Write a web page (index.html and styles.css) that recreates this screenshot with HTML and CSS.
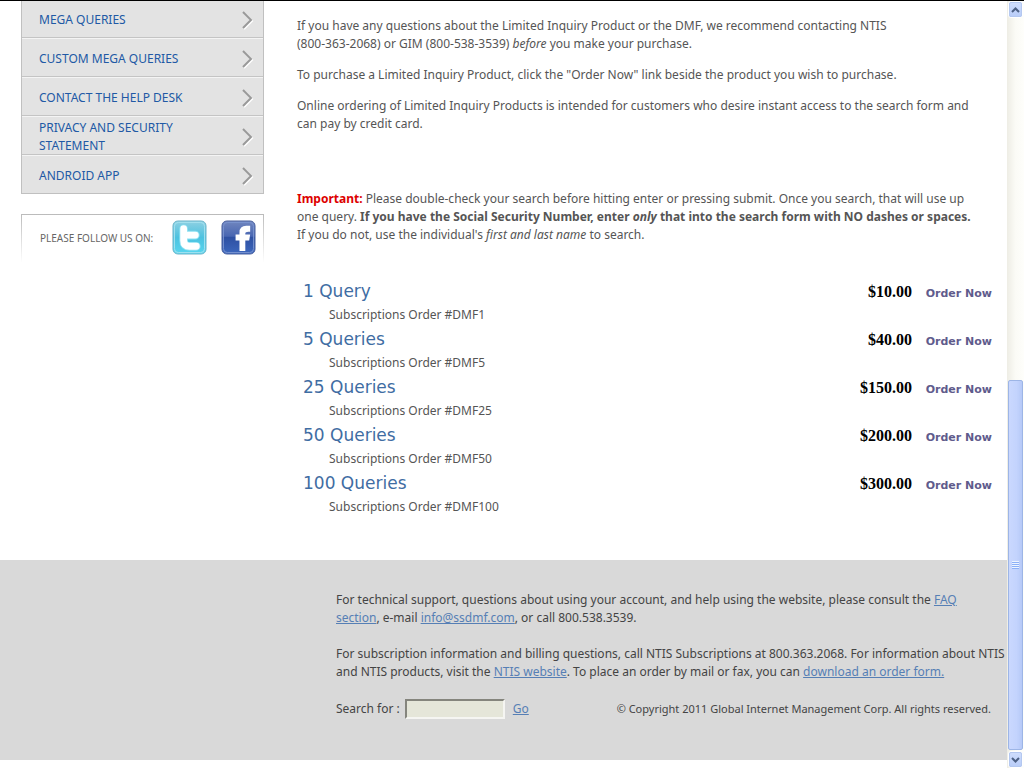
FILE: index.html
```html
<!DOCTYPE html>
<html lang="en">
<head>
<meta charset="utf-8">
<title>Limited Inquiry Products</title>
<link rel="stylesheet" href="styles.css">
</head>
<body>
<div class="window">
  <div class="page">
    <div class="columns">
      <aside class="sidebar">
        <nav class="menu">
          <a href="#"><span>MEGA QUERIES</span><svg class="chevron" viewBox="0 0 14 20"><path class="glow" d="M4 3l8 8-8 8"/><path class="line" d="M3 2l8 8-8 8"/></svg></a>
          <a href="#"><span>CUSTOM MEGA QUERIES</span><svg class="chevron" viewBox="0 0 14 20"><path class="glow" d="M4 3l8 8-8 8"/><path class="line" d="M3 2l8 8-8 8"/></svg></a>
          <a href="#"><span>CONTACT THE HELP DESK</span><svg class="chevron" viewBox="0 0 14 20"><path class="glow" d="M4 3l8 8-8 8"/><path class="line" d="M3 2l8 8-8 8"/></svg></a>
          <a href="#"><span>PRIVACY AND SECURITY STATEMENT</span><svg class="chevron" viewBox="0 0 14 20"><path class="glow" d="M4 3l8 8-8 8"/><path class="line" d="M3 2l8 8-8 8"/></svg></a>
          <a href="#"><span>ANDROID APP</span><svg class="chevron" viewBox="0 0 14 20"><path class="glow" d="M4 3l8 8-8 8"/><path class="line" d="M3 2l8 8-8 8"/></svg></a>
        </nav>
        <div class="follow">
          <span class="follow-label">PLEASE FOLLOW US ON:</span>
          <a href="#" aria-label="Twitter">
            <svg class="social" viewBox="0 0 36 36">
              <defs><linearGradient id="tw" x1="0" y1="0" x2="0" y2="1"><stop offset="0" stop-color="#8fd0e2"/><stop offset=".5" stop-color="#4cc2e0"/><stop offset="1" stop-color="#58d6ef"/></linearGradient></defs>
              <rect x="1" y="1" width="34" height="34" rx="5" fill="url(#tw)" stroke="#6eb5c9"/>
              <rect x="2.500" y="2.500" width="31" height="31" rx="4" fill="none" stroke="#a6e2ef"/>
              <path d="M12 9v12q0 6 6 6h7M12 15.500h12" fill="none" stroke="#8be0f2" stroke-width="9" stroke-linecap="round" stroke-linejoin="round"/>
              <path d="M12 9v12q0 6 6 6h7M12 15.500h12" fill="none" stroke="#fff" stroke-width="7" stroke-linecap="round" stroke-linejoin="round"/>
            </svg>
          </a>
          <a href="#" aria-label="Facebook">
            <svg class="social" viewBox="0 0 36 36">
              <defs><linearGradient id="fb" x1="0" y1="0" x2="0" y2="1"><stop offset="0" stop-color="#7186be"/><stop offset=".46" stop-color="#4866b2"/><stop offset=".5" stop-color="#2e50a2"/><stop offset="1" stop-color="#3c67bd"/></linearGradient></defs>
              <rect x="1" y="1" width="34" height="34" rx="5" fill="url(#fb)" stroke="#4c629f"/>
              <rect x="2.500" y="2.500" width="31" height="31" rx="4" fill="none" stroke="#7a94cf"/>
              <path d="M19 32V21h-4v-6h4v-2q0-7 7-7h4v6h-2q-3 0-3 2v1h5l-1 6h-4v11z" fill="#fff"/>
            </svg>
          </a>
        </div>
      </aside>
      <main class="content">
        <p>If you have any questions about the Limited Inquiry Product or the DMF, we recommend contacting NTIS<br>(800-363-2068) or GIM (800-538-3539) <em>before</em> you make your purchase.</p>
        <p>To purchase a Limited Inquiry Product, click the "Order Now" link beside the product you wish to purchase.</p>
        <p>Online ordering of Limited Inquiry Products is intended for customers who desire instant access to the search form and<br>can pay by credit card.</p>
        <p class="notice"><strong class="important">Important:</strong> Please double-check your search before hitting enter or pressing submit. Once you search, that will use up<br>one query. <strong>If you have the Social Security Number, enter <em>only</em> that into the search form with NO dashes or spaces.</strong><br>If you do not, use the individual's <em>first and last name</em> to search.</p>
        <table class="products">
          <tbody>
            <tr><td><h2>1 Query</h2><div class="sku">Subscriptions Order #DMF1</div></td><td class="price">$10.00</td><td class="order"><a href="#">Order Now</a></td></tr>
            <tr><td><h2>5 Queries</h2><div class="sku">Subscriptions Order #DMF5</div></td><td class="price">$40.00</td><td class="order"><a href="#">Order Now</a></td></tr>
            <tr><td><h2>25 Queries</h2><div class="sku">Subscriptions Order #DMF25</div></td><td class="price">$150.00</td><td class="order"><a href="#">Order Now</a></td></tr>
            <tr><td><h2>50 Queries</h2><div class="sku">Subscriptions Order #DMF50</div></td><td class="price">$200.00</td><td class="order"><a href="#">Order Now</a></td></tr>
            <tr><td><h2>100 Queries</h2><div class="sku">Subscriptions Order #DMF100</div></td><td class="price">$300.00</td><td class="order"><a href="#">Order Now</a></td></tr>
          </tbody>
        </table>
      </main>
    </div>
    <footer class="footer">
      <p>For technical support, questions about using your account, and help using the website, please consult the <a href="#">FAQ<br>section</a>, e-mail <a href="#">info@ssdmf.com</a>, or call 800.538.3539.</p>
      <p>For subscription information and billing questions, call NTIS Subscriptions at 800.363.2068. For information about NTIS<br>and NTIS products, visit the <a href="#">NTIS website</a>. To place an order by mail or fax, you can <a href="#">download an order form.</a></p>
      <div class="search">
        <label for="q">Search for :</label>
        <input id="q" type="text">
        <a href="#">Go</a>
        <small class="copyright">© Copyright 2011 Global Internet Management Corp. All rights reserved.</small>
      </div>
    </footer>
  </div>
  <div class="scrollbar">
    <button class="step" type="button" aria-label="Scroll up"><svg viewBox="0 0 9 6"><path d="M1 5l3.500-3.500L8 5"/></svg></button>
    <div class="track"><div class="thumb"><i></i><i></i><i></i><i></i></div></div>
    <button class="step" type="button" aria-label="Scroll down"><svg viewBox="0 0 9 6"><path d="M1 1l3.500 3.500L8 1"/></svg></button>
  </div>
</div>
</body>
</html>
```
FILE: styles.css
```css
* { box-sizing: border-box; }
body {
  margin: 0;
  background: #fff;
  color: #555;
  font: 12px/18px "Noto Sans", "Open Sans", sans-serif;
}
.window {
  display: flex;
  min-height: 100vh;
  border-top: 1px solid #000;
}
.page { flex: 1; min-width: 0; }
.columns {
  display: flex;
  gap: 33px;
  padding: 0 12px 42px 21px;
}

/* Side menu */
.sidebar { flex: 0 0 243px; }
.menu {
  border: 1px solid #c0c0c0;
  border-top: 0;
  background: #e3e3e3;
}
.menu a {
  display: flex;
  align-items: center;
  justify-content: space-between;
  height: 39px;
  padding: 2px 9px 0 17px;
  border-top: 1px solid #f4f4f4;
  border-bottom: 1px solid #c4c4c4;
  color: #2159a5;
  text-decoration: none;
}
.menu a:first-child { height: 37px; border-top: 0; }
.menu a:last-child { border-bottom: 0; height: 38px; }
.menu span { max-width: 170px; }
.chevron { width: 14px; height: 20px; fill: none; }
.glow { stroke: #fff; stroke-width: 2; }
.line { stroke: #999; stroke-width: 2; }

.follow {
  display: flex;
  align-items: center;
  gap: 14px;
  height: 48px;
  margin-top: 20px;
  padding: 0 7px 2px 18px;
  border: 1px solid;
  border-bottom: 0;
  border-image: linear-gradient(#bbb, #fff) 1;
}
.follow-label {
  margin-right: auto;
  color: #666;
  font-size: 10px;
  white-space: nowrap;
}
.social { display: block; width: 35px; height: 35px; }

/* Main text */
.content { flex: 1; min-width: 0; padding-top: 16px; }
.content p { margin: 0 0 13px; white-space: nowrap; }
.content .notice { margin: 57px 0 34px; }
.important { color: #d00; }

.products { width: 100%; border-collapse: collapse; }
.products td { height: 48px; padding: 0; vertical-align: top; }
.products h2 {
  margin: 0;
  padding-left: 6px;
  color: #3f6da3;
  font: 17px/26px "DejaVu Sans", sans-serif;
}
.sku { padding-left: 32px; line-height: 22px; }
.products .price {
  width: 90px;
  padding-top: 2px;
  color: #000;
  font: bold 16px/24px "Liberation Serif", serif;
  text-align: right;
}
.products .order {
  width: 83px;
  padding: 4px 3px 0 0;
  font: bold 11px/24px "DejaVu Sans", sans-serif;
  text-align: right;
}
.order a { color: #5f5b8c; text-decoration: none; }

/* Footer */
.footer {
  min-height: 200px;
  padding: 31px 16px 0 336px;
  background: #d9d9d9;
  color: #444;
}
.footer p { margin: 0 0 18px; white-space: nowrap; }
.footer a { color: #567fb5; }
.search { display: flex; align-items: center; gap: 5px; }
.search input {
  width: 100px;
  height: 20px;
  border: 2px solid;
  border-color: #85857d #f5f5f2 #f5f5f2 #85857d;
  background: #e5e6d9;
}
.search a { margin-left: 3px; }
.copyright { margin-left: auto; font-size: 11px; white-space: nowrap; }

/* Scrollbar */
.scrollbar {
  display: flex;
  flex: 0 0 17px;
  flex-direction: column;
  background: linear-gradient(90deg, #eeede5, #fbfbf6 50%, #fefefb);
}
.step {
  display: grid;
  place-items: center;
  height: 17px;
  margin: 0 1px;
  padding: 0;
  border: 1px solid #fff;
  border-radius: 3px;
  outline: 1px solid #b4c8f0;
  outline-offset: -2px;
  background: linear-gradient(#d0defd, #b8ccf8);
}
.step svg { width: 9px; height: 6px; fill: none; stroke: #4d6185; stroke-width: 2; }
.track { display: flex; flex: 1; flex-direction: column; justify-content: flex-end; }
.thumb {
  display: flex;
  flex-direction: column;
  align-items: center;
  justify-content: center;
  height: 50.5%;
  margin: 0 1px 1px;
  border: 1px solid #9db5e6;
  border-radius: 2px;
  background: linear-gradient(90deg, #cad8fe, #c3d3fd 60%, #b6c9f7);
}
.thumb i {
  width: 7px;
  height: 2px;
  background: #eef4fe;
  border-bottom: 1px solid #8cb0f8;
}
```
